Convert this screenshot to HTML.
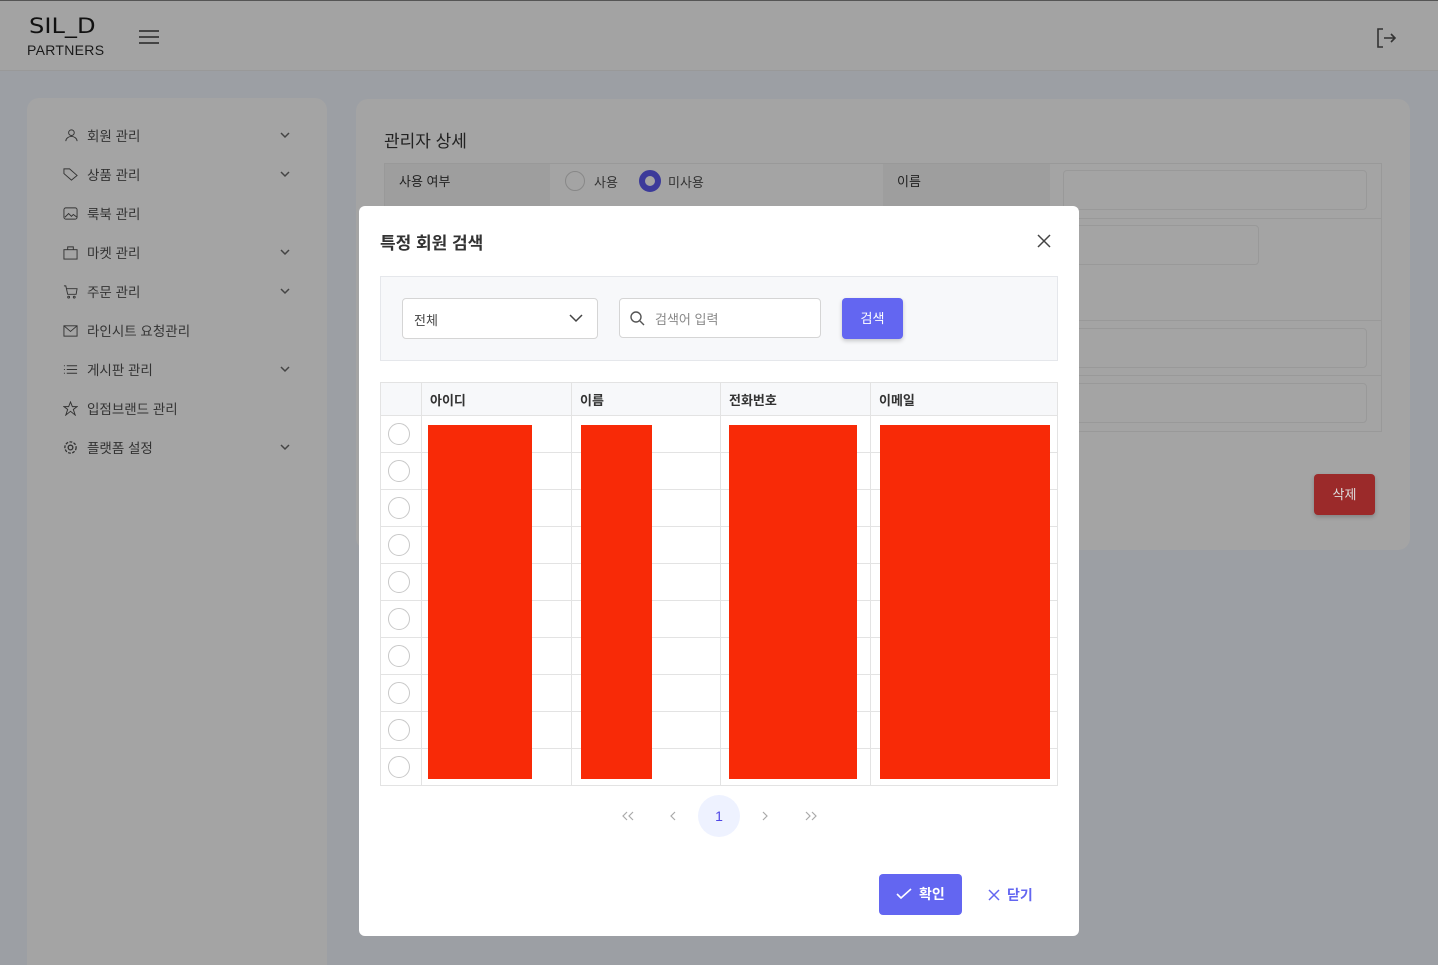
<!DOCTYPE html>
<html><head><meta charset="utf-8"><style>
*{box-sizing:border-box;margin:0;padding:0}
html,body{width:1438px;height:965px;overflow:hidden}
body{background:#9c9fa4;font-family:"Liberation Sans","Noto Sans CJK KR",sans-serif;position:relative;color:#333}
.a{position:absolute}
.hdr{left:0;top:0;width:1438px;height:71px;background:#a3a3a3;border-top:1px solid #555;border-bottom:1px solid #999}
.side{left:27px;top:98px;width:300px;height:867px;background:#a4a4a4;border-radius:12px 12px 0 0}
.main{left:356px;top:99px;width:1054px;height:451px;background:#a4a4a4;border-radius:12px}
.mi{position:absolute;left:36px;font-size:13.5px;color:#333;display:flex;align-items:center;gap:9px}
.mi svg{width:15px;height:15px}
.chev{position:absolute;left:253px;width:10px;height:7px}
.modal{left:359px;top:206px;width:720px;height:730px;background:#fff;border-radius:6px}
.cell{position:absolute;border-right:1px solid #e3e3e3}
.red{position:absolute;background:#f82a07}
.rd{position:absolute;left:8px;width:22px;height:22px;border:1.5px solid #c8c8c8;border-radius:50%}
.pg{position:absolute;top:806px;font-size:18px;color:#aaa}
</style></head><body>
<div class="a hdr">
 <div class="a" style="left:29px;top:13px;font-size:21px;letter-spacing:0;color:#111;font-family:'DejaVu Sans',sans-serif;transform:scaleX(1.15);transform-origin:left">SIL_D</div>
 <div class="a" style="left:27px;top:41px;font-size:14px;color:#1a1a1a;letter-spacing:.3px">PARTNERS</div>
 <div class="a" style="left:139px;top:29px;width:20px;height:2px;background:#444;box-shadow:0 6px 0 #444,0 12px 0 #444"></div>
 <svg class="a" style="left:1374px;top:25px" width="24" height="24" viewBox="0 0 24 24" fill="none" stroke="#333" stroke-width="1.6"><path d="M9 3H4v18h5M10 12h11M17 8l4 4-4 4"/></svg>
</div>
<div class="a side">
 <div class="mi" style="top:27px"><svg viewBox="0 0 16 16" fill="none" stroke="#333"><circle cx="9" cy="5" r="3"/><path d="M3 14c0-3 3-5 6-5s6 2 6 5"/></svg>회원 관리</div><svg class="chev" style="top:34px" viewBox="0 0 10 7" fill="none" stroke="#444" stroke-width="1.5"><path d="M1 1l4 4 4-4"/></svg>
 <div class="mi" style="top:66px"><svg viewBox="0 0 16 16" fill="none" stroke="#333"><path d="M1 7V2h6l8 7-6 5z"/></svg>상품 관리</div><svg class="chev" style="top:73px" viewBox="0 0 10 7" fill="none" stroke="#444" stroke-width="1.5"><path d="M1 1l4 4 4-4"/></svg>
 <div class="mi" style="top:105px"><svg viewBox="0 0 16 16" fill="none" stroke="#333"><rect x="1" y="2" width="14" height="12" rx="2"/><path d="M2 12l4-4 3 3 2-2 4 3"/></svg>룩북 관리</div>
 <div class="mi" style="top:144px"><svg viewBox="0 0 16 16" fill="none" stroke="#333"><rect x="1" y="5" width="14" height="10"/><path d="M5 5V2h6v3"/></svg>마켓 관리</div><svg class="chev" style="top:151px" viewBox="0 0 10 7" fill="none" stroke="#444" stroke-width="1.5"><path d="M1 1l4 4 4-4"/></svg>
 <div class="mi" style="top:183px"><svg viewBox="0 0 16 16" fill="none" stroke="#333"><path d="M1 2h2l2 9h9l1-6H4"/><circle cx="6" cy="14" r="1"/><circle cx="12" cy="14" r="1"/></svg>주문 관리</div><svg class="chev" style="top:190px" viewBox="0 0 10 7" fill="none" stroke="#444" stroke-width="1.5"><path d="M1 1l4 4 4-4"/></svg>
 <div class="mi" style="top:222px"><svg viewBox="0 0 16 16" fill="none" stroke="#333"><rect x="1" y="3" width="14" height="11"/><path d="M1 3l7 6 7-6"/></svg>라인시트 요청관리</div>
 <div class="mi" style="top:261px"><svg viewBox="0 0 16 16" fill="none" stroke="#333"><path d="M4 4h11M4 8h11M4 12h11M1 4h1M1 8h1M1 12h1"/></svg>게시판 관리</div><svg class="chev" style="top:268px" viewBox="0 0 10 7" fill="none" stroke="#444" stroke-width="1.5"><path d="M1 1l4 4 4-4"/></svg>
 <div class="mi" style="top:300px"><svg viewBox="0 0 16 16" fill="none" stroke="#333"><path d="M8 1l2 5h5l-4 3 2 6-5-4-5 4 2-6-4-3h5z"/></svg>입점브랜드 관리</div>
 <div class="mi" style="top:339px"><svg viewBox="0 0 16 16" fill="none" stroke="#333" stroke-width="1.4"><circle cx="8" cy="8" r="2.5"/><circle cx="8" cy="8" r="6" stroke-dasharray="3 1.5"/></svg>플랫폼 설정</div><svg class="chev" style="top:346px" viewBox="0 0 10 7" fill="none" stroke="#444" stroke-width="1.5"><path d="M1 1l4 4 4-4"/></svg>
</div>
<div class="a main">
 <div class="a" style="left:28px;top:28px;font-size:17px;color:#222">관리자 상세</div>
 <div class="a" style="left:28px;top:64px;width:998px;height:269px;border:1px solid #999"></div>
 <div class="a" style="left:29px;top:65px;width:165px;height:45px;background:#9e9e9e"></div>
 <div class="a" style="left:43px;top:72px;font-size:13px;color:#222">사용 여부</div>
 <div class="a" style="left:209px;top:72px;width:20px;height:20px;border:1.5px solid #888;border-radius:50%"></div>
 <div class="a" style="left:238px;top:73px;font-size:13px;color:#333">사용</div>
 <div class="a" style="left:283px;top:71px;width:22px;height:22px;border:6px solid #3b3a9a;border-radius:50%;background:#a4a4a4"></div>
 <div class="a" style="left:312px;top:73px;font-size:13px;color:#333">미사용</div>
 <div class="a" style="left:527px;top:65px;width:167px;height:45px;background:#9e9e9e"></div>
 <div class="a" style="left:541px;top:72px;font-size:13px;color:#222">이름</div>
 <div class="a" style="left:707px;top:71px;width:304px;height:40px;border:1px solid #999;border-radius:4px"></div>
 <div class="a" style="left:28px;top:119px;width:998px;height:1px;background:#999"></div>
 <div class="a" style="left:707px;top:126px;width:196px;height:40px;border:1px solid #999;border-radius:4px"></div>
 <div class="a" style="left:28px;top:221px;width:998px;height:1px;background:#999"></div>
 <div class="a" style="left:707px;top:229px;width:304px;height:40px;border:1px solid #999;border-radius:4px"></div>
 <div class="a" style="left:28px;top:276px;width:998px;height:1px;background:#999"></div>
 <div class="a" style="left:707px;top:284px;width:304px;height:40px;border:1px solid #999;border-radius:4px"></div>
 <div class="a" style="left:958px;top:375px;width:61px;height:41px;background:#9b2a2a;border-radius:4px;color:#ddd;font-size:13px;text-align:center;line-height:41px;box-shadow:0 2px 4px rgba(0,0,0,.2)">삭제</div>
</div>
<div class="a modal">
 <div class="a" style="left:21px;top:23px;font-size:17px;font-weight:bold;color:#333">특정 회원 검색</div>
 <svg class="a" style="left:678px;top:28px" width="14" height="14" viewBox="0 0 14 14" stroke="#444" stroke-width="1.5"><path d="M1 1l12 12M13 1L1 13"/></svg>
 <div class="a" style="left:21px;top:70px;width:678px;height:85px;background:#f7f8fa;border:1px solid #e5e7eb"></div>
 <div class="a" style="left:43px;top:92px;width:196px;height:41px;background:#fff;border:1px solid #d5d5d5;border-radius:4px;font-size:13px;color:#444;padding:11px 11px">전체
  <svg class="a" style="right:14px;top:14px" width="14" height="10" viewBox="0 0 14 10" fill="none" stroke="#444" stroke-width="1.5"><path d="M1 2l6 6 6-6"/></svg></div>
 <div class="a" style="left:260px;top:92px;width:202px;height:40px;background:#fff;border:1px solid #d5d5d5;border-radius:4px;font-size:13px;color:#888;padding:10px 0 0 35px">검색어 입력
  <svg class="a" style="left:9px;top:11px" width="16" height="16" viewBox="0 0 16 16" fill="none" stroke="#555" stroke-width="1.4"><circle cx="7" cy="7" r="5"/><path d="M11 11l4 4"/></svg></div>
 <div class="a" style="left:483px;top:92px;width:61px;height:41px;background:#6366f1;border-radius:4px;color:#fff;font-size:13px;text-align:center;line-height:41px;box-shadow:0 2px 4px rgba(0,0,0,.2)">검색</div>
 <div class="a" style="left:21px;top:176px;width:678px;height:404px;border:1px solid #e3e3e3">
  <div class="a" style="left:0;top:0;width:676px;height:33px;background:#f7f8fa;border-bottom:1px solid #e3e3e3"></div>
  <div class="cell" style="left:0;top:0;width:41px;height:402px"></div>
  <div class="cell" style="left:41px;top:0;width:150px;height:402px"></div>
  <div class="cell" style="left:191px;top:0;width:149px;height:402px"></div>
  <div class="cell" style="left:340px;top:0;width:150px;height:402px"></div>
  <div class="a" style="left:49px;top:7px;font-size:13px;font-weight:bold;color:#333">아이디</div>
  <div class="a" style="left:199px;top:7px;font-size:13px;font-weight:bold;color:#333">이름</div>
  <div class="a" style="left:348px;top:7px;font-size:13px;font-weight:bold;color:#333">전화번호</div>
  <div class="a" style="left:498px;top:7px;font-size:13px;font-weight:bold;color:#333">이메일</div>
  <div class="a" style="left:0;top:69px;width:676px;height:1px;background:#e3e3e3;box-shadow:0 37px 0 #e3e3e3,0 74px 0 #e3e3e3,0 111px 0 #e3e3e3,0 148px 0 #e3e3e3,0 185px 0 #e3e3e3,0 222px 0 #e3e3e3,0 259px 0 #e3e3e3,0 296px 0 #e3e3e3"></div>
  <div class="rd" style="top:40px;left:7px"></div><div class="rd" style="top:77px;left:7px"></div><div class="rd" style="top:114px;left:7px"></div><div class="rd" style="top:151px;left:7px"></div><div class="rd" style="top:188px;left:7px"></div><div class="rd" style="top:225px;left:7px"></div><div class="rd" style="top:262px;left:7px"></div><div class="rd" style="top:299px;left:7px"></div><div class="rd" style="top:336px;left:7px"></div><div class="rd" style="top:373px;left:7px"></div>
  <div class="red" style="left:47px;top:42px;width:104px;height:354px"></div>
  <div class="red" style="left:200px;top:42px;width:71px;height:354px"></div>
  <div class="red" style="left:348px;top:42px;width:128px;height:354px"></div>
  <div class="red" style="left:499px;top:42px;width:170px;height:354px"></div>
 </div>
 <div class="a" style="left:339px;top:589px;width:42px;height:42px;border-radius:50%;background:#eef2ff;color:#4f46e5;font-size:14px;text-align:center;line-height:42px">1</div>
 <svg class="a" style="left:262px;top:604px" width="14" height="12" viewBox="0 0 14 12" fill="none" stroke="#aaa" stroke-width="1.2"><path d="M6 2L2 6l4 4M12 2L8 6l4 4"/></svg>
 <svg class="a" style="left:310px;top:604px" width="8" height="12" viewBox="0 0 8 12" fill="none" stroke="#aaa" stroke-width="1.2"><path d="M6 2L2 6l4 4"/></svg>
 <svg class="a" style="left:402px;top:604px" width="8" height="12" viewBox="0 0 8 12" fill="none" stroke="#aaa" stroke-width="1.2"><path d="M2 2l4 4-4 4"/></svg>
 <svg class="a" style="left:445px;top:604px" width="14" height="12" viewBox="0 0 14 12" fill="none" stroke="#aaa" stroke-width="1.2"><path d="M2 2l4 4-4 4M8 2l4 4-4 4"/></svg>
 <div class="a" style="left:520px;top:668px;width:83px;height:41px;background:#6366f1;border-radius:4px;color:#fff;font-size:14px;font-weight:bold;line-height:41px;padding-left:40px">확인
  <svg class="a" style="left:17px;top:14px" width="16" height="12" viewBox="0 0 16 12" fill="none" stroke="#fff" stroke-width="1.6"><path d="M1 6l4 4 10-9"/></svg></div>
 <svg class="a" style="left:629px;top:683px" width="12" height="12" viewBox="0 0 12 12" stroke="#6366f1" stroke-width="1.5"><path d="M1 1l10 10M11 1L1 11"/></svg>
 <div class="a" style="left:648px;top:679px;font-size:14px;color:#6366f1;font-weight:bold">닫기</div>
</div>
</body></html>
